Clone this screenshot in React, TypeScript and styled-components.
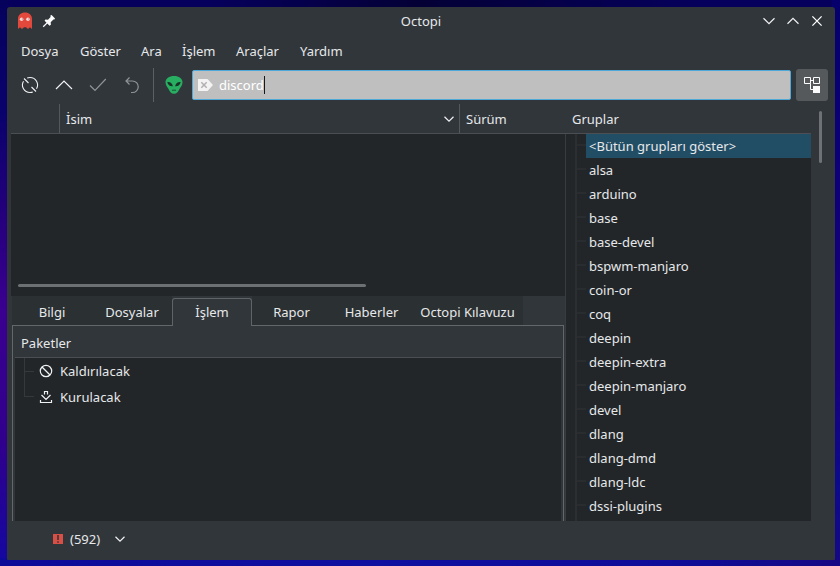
import React from "react";
import styled, { createGlobalStyle } from "styled-components";

const GlobalStyle = createGlobalStyle`
  * { box-sizing: border-box; }
  html, body { margin: 0; padding: 0; }
  body {
    width: 840px;
    height: 566px;
    overflow: hidden;
    font-family: "Noto Sans", sans-serif;
    font-size: 13px;
    line-height: 18px;
    color: #e6e8ea;
  }
`;

const Desktop = styled.div`
  width: 840px;
  height: 566px;
  padding: 7px 5px 6px 7px;
  background:
    linear-gradient(90deg, transparent 210px, rgba(3, 0, 40, 0.75) 420px, transparent 700px) 0 0 / 840px 7px no-repeat,
    linear-gradient(90deg, #0d0a98, #0f0fa0 45%, #0e0c98 80%, #160884) 0 100% / 840px 8px no-repeat,
    linear-gradient(180deg, #05006c, #0d0078 30%, #18007c 65%, #0c0a8c 85%, #160884) 100% 0 / 8px 566px no-repeat,
    linear-gradient(180deg, #05025c, #0a026c 20%, #24007c 38%, #3a0090 55%, #30008c 78%, #1408a0) 0 0 / 8px 566px no-repeat,
    #06005c;
`;

const Window = styled.main`
  display: flex;
  flex-direction: column;
  width: 828px;
  height: 553px;
  overflow: hidden;
  border-radius: 3px 3px 1px 1px;
  background: #31363b;
`;

const TitleBar = styled.header`
  display: grid;
  grid-template-columns: 96px 1fr 96px;
  align-items: center;
  height: 28px;
  flex: none;
`;

const TitleIcons = styled.div`
  display: flex;
  align-items: center;
  gap: 9px;
  padding-left: 10px;
`;

const Title = styled.div`
  text-align: center;
  font-size: 13px;
`;

const WindowButtons = styled.div`
  display: flex;
  justify-content: flex-end;
  gap: 8px;
  padding-right: 10px;
`;

const MenuBar = styled.nav`
  display: flex;
  align-items: center;
  height: 32px;
  flex: none;
  padding-left: 14px;
`;

const MenuItem = styled.div<{ $width: number }>`
  width: ${(p) => p.$width}px;
  white-space: nowrap;
`;

const ToolBar = styled.div`
  display: flex;
  align-items: center;
  height: 36px;
  flex: none;
  padding-left: 12px;
`;

const ToolButton = styled.div<{ $dim?: boolean }>`
  display: flex;
  width: 22px;
  margin-right: 12px;
  opacity: ${(p) => (p.$dim ? 0.5 : 1)};
`;

const ToolDivider = styled.div`
  width: 1px;
  height: 34px;
  margin: 0 11px 0 -2px;
  background: #5c6064;
`;

const SearchField = styled.div`
  display: flex;
  align-items: center;
  width: 599px;
  height: 30px;
  margin-left: 9px;
  padding-left: 4px;
  border: 1px solid #4fa9d8;
  border-radius: 2px;
  background: #bfbfbf;
  color: #fff;
`;

const SearchText = styled.span`
  margin-left: 5px;
`;

const Caret = styled.span`
  width: 1px;
  height: 18px;
  background: #16191b;
`;

const GroupsToggle = styled.div`
  display: flex;
  align-items: center;
  justify-content: center;
  width: 32px;
  height: 32px;
  margin-left: 5px;
  border-radius: 3px;
  background: #56595c;
`;

const Body = styled.div`
  display: flex;
  height: 418px;
  flex: none;
  padding-left: 4px;
`;

const LeftPane = styled.section`
  display: flex;
  flex-direction: column;
  width: 554px;
`;

const PackageHeader = styled.div`
  display: flex;
  height: 31px;
  flex: none;
  padding-top: 1px;
  border-bottom: 1px solid #4b4f54;
`;

const HeaderCell = styled.div<{ $width: number; $divider?: boolean }>`
  display: flex;
  align-items: center;
  justify-content: space-between;
  width: ${(p) => p.$width}px;
  padding: 1px 4px 0 6px;
  border-right: ${(p) => (p.$divider ? "1px solid #54585d" : "none")};
`;

const PackageList = styled.div`
  display: flex;
  align-items: flex-end;
  height: 162px;
  flex: none;
  padding: 0 0 9px 7px;
  background: #232629;
`;

const HorizontalThumb = styled.div`
  width: 348px;
  height: 3px;
  border-radius: 2px;
  background: #6c7073;
`;

const TabStrip = styled.div`
  display: flex;
  align-items: flex-end;
  height: 30px;
  flex: none;
  margin-bottom: -1px;
  padding-left: 1px;
`;

const Tab = styled.div<{ $width: number; $active?: boolean }>`
  display: flex;
  align-items: center;
  justify-content: center;
  width: ${(p) => p.$width}px;
  height: ${(p) => (p.$active ? 28 : 29)}px;
  padding-top: ${(p) => (p.$active ? 0 : 3)}px;
  padding-bottom: ${(p) => (p.$active ? 1 : 0)}px;
  margin-bottom: ${(p) => (p.$active ? 0 : 1)}px;
  white-space: nowrap;
  border: ${(p) => (p.$active ? "1px solid #5f6467" : "none")};
  border-bottom: none;
  border-radius: ${(p) => (p.$active ? "3px 3px 0 0" : "0")};
  background: ${(p) => (p.$active ? "#31363b" : "#2b3033")};
  z-index: ${(p) => (p.$active ? 1 : 0)};
`;

const TabPanel = styled.div`
  flex: 1;
  width: 552px;
  margin-left: 1px;
  padding: 3px 2px 0 2px;
  border: 1px solid #63676a;
  border-bottom: none;
`;

const PanelHeader = styled.div`
  height: 29px;
  padding: 5px 6px 0;
  border-bottom: 1px solid #4b4f54;
`;

const ActionTree = styled.div`
  height: 163px;
  background: #232629;
`;

const ActionRow = styled.div`
  display: flex;
  align-items: center;
  height: 26px;
`;

const ActionBranch = styled.div<{ $last?: boolean }>`
  display: flex;
  align-items: center;
  width: 20px;
  height: ${(p) => (p.$last ? 13 : 26)}px;
  align-self: flex-start;
  margin: 0 3px 0 0;
  padding-left: 9px;

  &::before {
    content: "";
    width: 1px;
    height: 100%;
    background: #35393c;
  }

  &::after {
    content: "";
    width: 9px;
    height: 1px;
    align-self: ${(p) => (p.$last ? "flex-end" : "center")};
    background: #35393c;
  }
`;

const ActionLabel = styled.span`
  margin-left: 6px;
`;

const RightPane = styled.aside`
  display: flex;
  flex-direction: column;
  width: 246px;
`;

const GroupHeader = styled.div`
  height: 31px;
  flex: none;
  padding: 7px 7px 0;
  border-bottom: 1px solid #4b4f54;
`;

const GroupTree = styled.div`
  height: 387px;
  overflow: hidden;
  border-left: 1px solid #373c41;
  background: #232629;
`;

const GroupRow = styled.div`
  display: flex;
  align-items: stretch;
  height: 24px;
`;

const GroupBranch = styled.div`
  display: flex;
  align-items: center;
  width: 20px;
  padding-left: 9px;

  &::before {
    content: "";
    width: 2px;
    height: 100%;
    background: #2b2f31;
  }

  &::after {
    content: "";
    width: 9px;
    height: 2px;
    margin-bottom: 2px;
    background: #2a2d30;
  }
`;

const GroupName = styled.div<{ $selected?: boolean }>`
  flex: 1;
  padding: 3px 3px;
  background: ${(p) => (p.$selected ? "#224e65" : "transparent")};
`;

const ScrollTrack = styled.div`
  width: 24px;
  padding: 8px 0 0 8px;
`;

const VerticalThumb = styled.div`
  width: 3px;
  height: 52px;
  border-radius: 2px;
  background: #6e7275;
`;

const StatusBar = styled.footer`
  display: flex;
  align-items: center;
  flex: 1;
  padding: 0 0 3px 46px;
`;

const UpdateCount = styled.span`
  margin: 0 14px 0 7px;
`;

const Ghost = () => (
  <svg width="16" height="18" viewBox="0 0 16 18">
    <path d="M1 17V7C1 3 4 .5 8 .5S15 3 15 7v10l-2-1.800-2 1.800-2-1.800h-2L5 17l-2-1.800z" fill="#e2493c" />
    <circle cx="4.6" cy="7.2" r="1.8" fill="#f4dcd9" />
    <circle cx="11" cy="7.2" r="1.800" fill="#f4dcd9" />
    <path d="M4.800 6.400H6v1.200H4.800zM11.200 6.400h1.200v1.200h-1.200z" fill="#a8808c" />
  </svg>
);

const Pin = () => (
  <svg width="14" height="14" viewBox="0 0 14 14">
    <path d="M8.400 1.500 9.600 1 13 4.400l-.6 1.200-1-.1-2.700 2.800.2 2.400-1.400 1L2.600 6.800l.8-1.300 2.600.2L8.600 3z" fill="#fcfcfc" />
    <path d="M5.400 8.600 1.200 12.800" stroke="#fcfcfc" strokeWidth="1.300" />
  </svg>
);

const Chevron = ({ up, size = 16, reach = 5.5 }: { up?: boolean; size?: number; reach?: number }) => {
  const c = size / 2;
  const dy = up ? reach / 2 : -reach / 2;
  return (
    <svg width={size} height={size} viewBox={`0 0 ${size} ${size}`} fill="none" stroke="#f0f1f2" strokeWidth="1.2">
      <path d={`M${c - reach} ${c + dy}L${c} ${c - dy}L${c + reach} ${c + dy}`} />
    </svg>
  );
};

const Cross = () => (
  <svg width="16" height="16" viewBox="0 0 16 16" stroke="#fcfcfc" strokeWidth="1.3">
    <path d="m3.4 3.4 9.200 9.200M12.600 3.400l-9.200 9.200" />
  </svg>
);

const Sync = () => (
  <svg width="22" height="22" viewBox="0 0 22 22" fill="none" stroke="#f0f1f2" strokeWidth="1.1">
    <path d="M11 18.500A7.500 7.500 0 0 1 4.500 7.200M5 4.500l4.500 4.500" />
    <path d="M11 3.500a7.500 7.500 0 0 1 6.500 11.300M17 17.500 12.500 13" />
    <path d="M8.200 4A7.500 7.500 0 0 1 11 3.500M13.800 18A7.500 7.500 0 0 1 11 18.500" />
  </svg>
);

const Check = () => (
  <svg width="22" height="22" viewBox="0 0 22 22" fill="none" stroke="#f0f1f2" strokeWidth="1.2">
    <path d="m3 11.5 5 5L18.8 5" />
  </svg>
);

const Undo = () => (
  <svg width="22" height="22" viewBox="0 0 22 22" fill="none" stroke="#f0f1f2" strokeWidth="1.2">
    <path d="M8.500 3.500 5 7l3.500 3.500M5 7h6.500a5.750 5.750 0 0 1 0 11.500H10" />
  </svg>
);

const Alien = () => (
  <svg width="18" height="20" viewBox="0 0 18 20">
    <path d="M9 1c5 0 8.500 2.600 8.500 6.300 0 3-2 5.100-3.300 7.200C12.800 17 12 18.800 9 18.800S5.200 17 3.800 14.500C2.500 12.400.5 10.300.5 7.300.5 3.600 4 1 9 1z" fill="#27ae60" />
    <path d="M2.300 7c2.700-.4 5 1 5.600 4.200C5 11.500 2.900 10 2.300 7zM15.700 7c-2.700-.4-5 1-5.600 4.200 2.900.3 5-1.200 5.600-4.200z" fill="#1b3028" />
    <path d="M7 15.200h4" stroke="#1b5035" strokeWidth="1" />
  </svg>
);

const ClearTag = () => (
  <svg width="17" height="12" viewBox="0 0 17 12">
    <path d="M1 0h9.500l5.500 6-5.500 6H1z" fill="#f3f3f3" />
    <path d="m4.300 3.300 5.400 5.400m0-5.400L4.300 8.700" stroke="#b0b0b0" strokeWidth="1.500" />
  </svg>
);

const TreeIcon = () => (
  <svg width="18" height="18" viewBox="0 0 18 18" fill="none" stroke="#fcfcfc">
    <path d="M1.500 1.500h6v6h-6zM10.500 1.500h6v6h-6zM7.500 4.500h3M7.500 7.500v6h3" />
    <path d="M10 10h7v7h-7z" fill="#fcfcfc" stroke="none" />
  </svg>
);

const Forbidden = () => (
  <svg width="16" height="16" viewBox="0 0 16 16" fill="none" stroke="#f0f1f2" strokeWidth="1.2">
    <circle cx="8" cy="8" r="5.7" />
    <path d="m4 4 8 8" />
  </svg>
);

const Install = () => (
  <svg width="16" height="16" viewBox="0 0 16 16" fill="none" stroke="#f0f1f2" strokeWidth="1.2">
    <path d="M6.500 5.500V2.500h3v3M3.500 6 8 10.500 12.500 6M2.500 11v2.500h11V11" />
  </svg>
);

const Alert = () => (
  <svg width="10" height="10" viewBox="0 0 10 10">
    <path d="M0 0h10v10H0z" fill="#da4f45" />
    <path d="M4.200 1h1.600v5H4.200zM4.200 7.200h1.600v1.600H4.200z" fill="#31363b" />
  </svg>
);

const menus = [
  { label: "Dosya", width: 59 },
  { label: "Göster", width: 61 },
  { label: "Ara", width: 41 },
  { label: "İşlem", width: 54 },
  { label: "Araçlar", width: 64 },
  { label: "Yardım", width: 60 },
];

const tabs = [
  { label: "Bilgi", width: 80 },
  { label: "Dosyalar", width: 80 },
  { label: "İşlem", width: 80, active: true },
  { label: "Rapor", width: 79 },
  { label: "Haberler", width: 81 },
  { label: "Octopi Kılavuzu", width: 111 },
];

const groups = [
  "<Bütün grupları göster>", "alsa", "arduino", "base", "base-devel", "bspwm-manjaro",
  "coin-or", "coq", "deepin", "deepin-extra", "deepin-manjaro", "devel", "dlang",
  "dlang-dmd", "dlang-ldc", "dssi-plugins", "",
];

export default function App() {
  return (
    <>
      <GlobalStyle />
      <Desktop>
        <Window>
          <TitleBar>
            <TitleIcons><Ghost /><Pin /></TitleIcons>
            <Title>Octopi</Title>
            <WindowButtons><Chevron /><Chevron up /><Cross /></WindowButtons>
          </TitleBar>
          <MenuBar>
            {menus.map((m) => <MenuItem key={m.label} $width={m.width}>{m.label}</MenuItem>)}
          </MenuBar>
          <ToolBar>
            <ToolButton><Sync /></ToolButton>
            <ToolButton><Chevron up size={22} reach={8} /></ToolButton>
            <ToolButton $dim><Check /></ToolButton>
            <ToolButton $dim><Undo /></ToolButton>
            <ToolDivider />
            <Alien />
            <SearchField>
              <ClearTag />
              <SearchText>discord</SearchText>
              <Caret />
            </SearchField>
            <GroupsToggle><TreeIcon /></GroupsToggle>
          </ToolBar>
          <Body>
            <LeftPane>
              <PackageHeader>
                <HeaderCell $width={49} $divider />
                <HeaderCell $width={400} $divider>İsim<Chevron size={12} reach={4.5} /></HeaderCell>
                <HeaderCell $width={105}>Sürüm</HeaderCell>
              </PackageHeader>
              <PackageList><HorizontalThumb /></PackageList>
              <TabStrip>
                {tabs.map((t) => <Tab key={t.label} $width={t.width} $active={t.active}>{t.label}</Tab>)}
              </TabStrip>
              <TabPanel>
                <PanelHeader>Paketler</PanelHeader>
                <ActionTree>
                  <ActionRow><ActionBranch /><Forbidden /><ActionLabel>Kaldırılacak</ActionLabel></ActionRow>
                  <ActionRow><ActionBranch $last /><Install /><ActionLabel>Kurulacak</ActionLabel></ActionRow>
                </ActionTree>
              </TabPanel>
            </LeftPane>
            <RightPane>
              <GroupHeader>Gruplar</GroupHeader>
              <GroupTree>
                {groups.map((name, i) => (
                  <GroupRow key={name}>
                    <GroupBranch />
                    <GroupName $selected={i === 0}>{name}</GroupName>
                  </GroupRow>
                ))}
              </GroupTree>
            </RightPane>
            <ScrollTrack><VerticalThumb /></ScrollTrack>
          </Body>
          <StatusBar>
            <Alert />
            <UpdateCount>(592)</UpdateCount>
            <Chevron size={12} reach={4.5} />
          </StatusBar>
        </Window>
      </Desktop>
    </>
  );
}
